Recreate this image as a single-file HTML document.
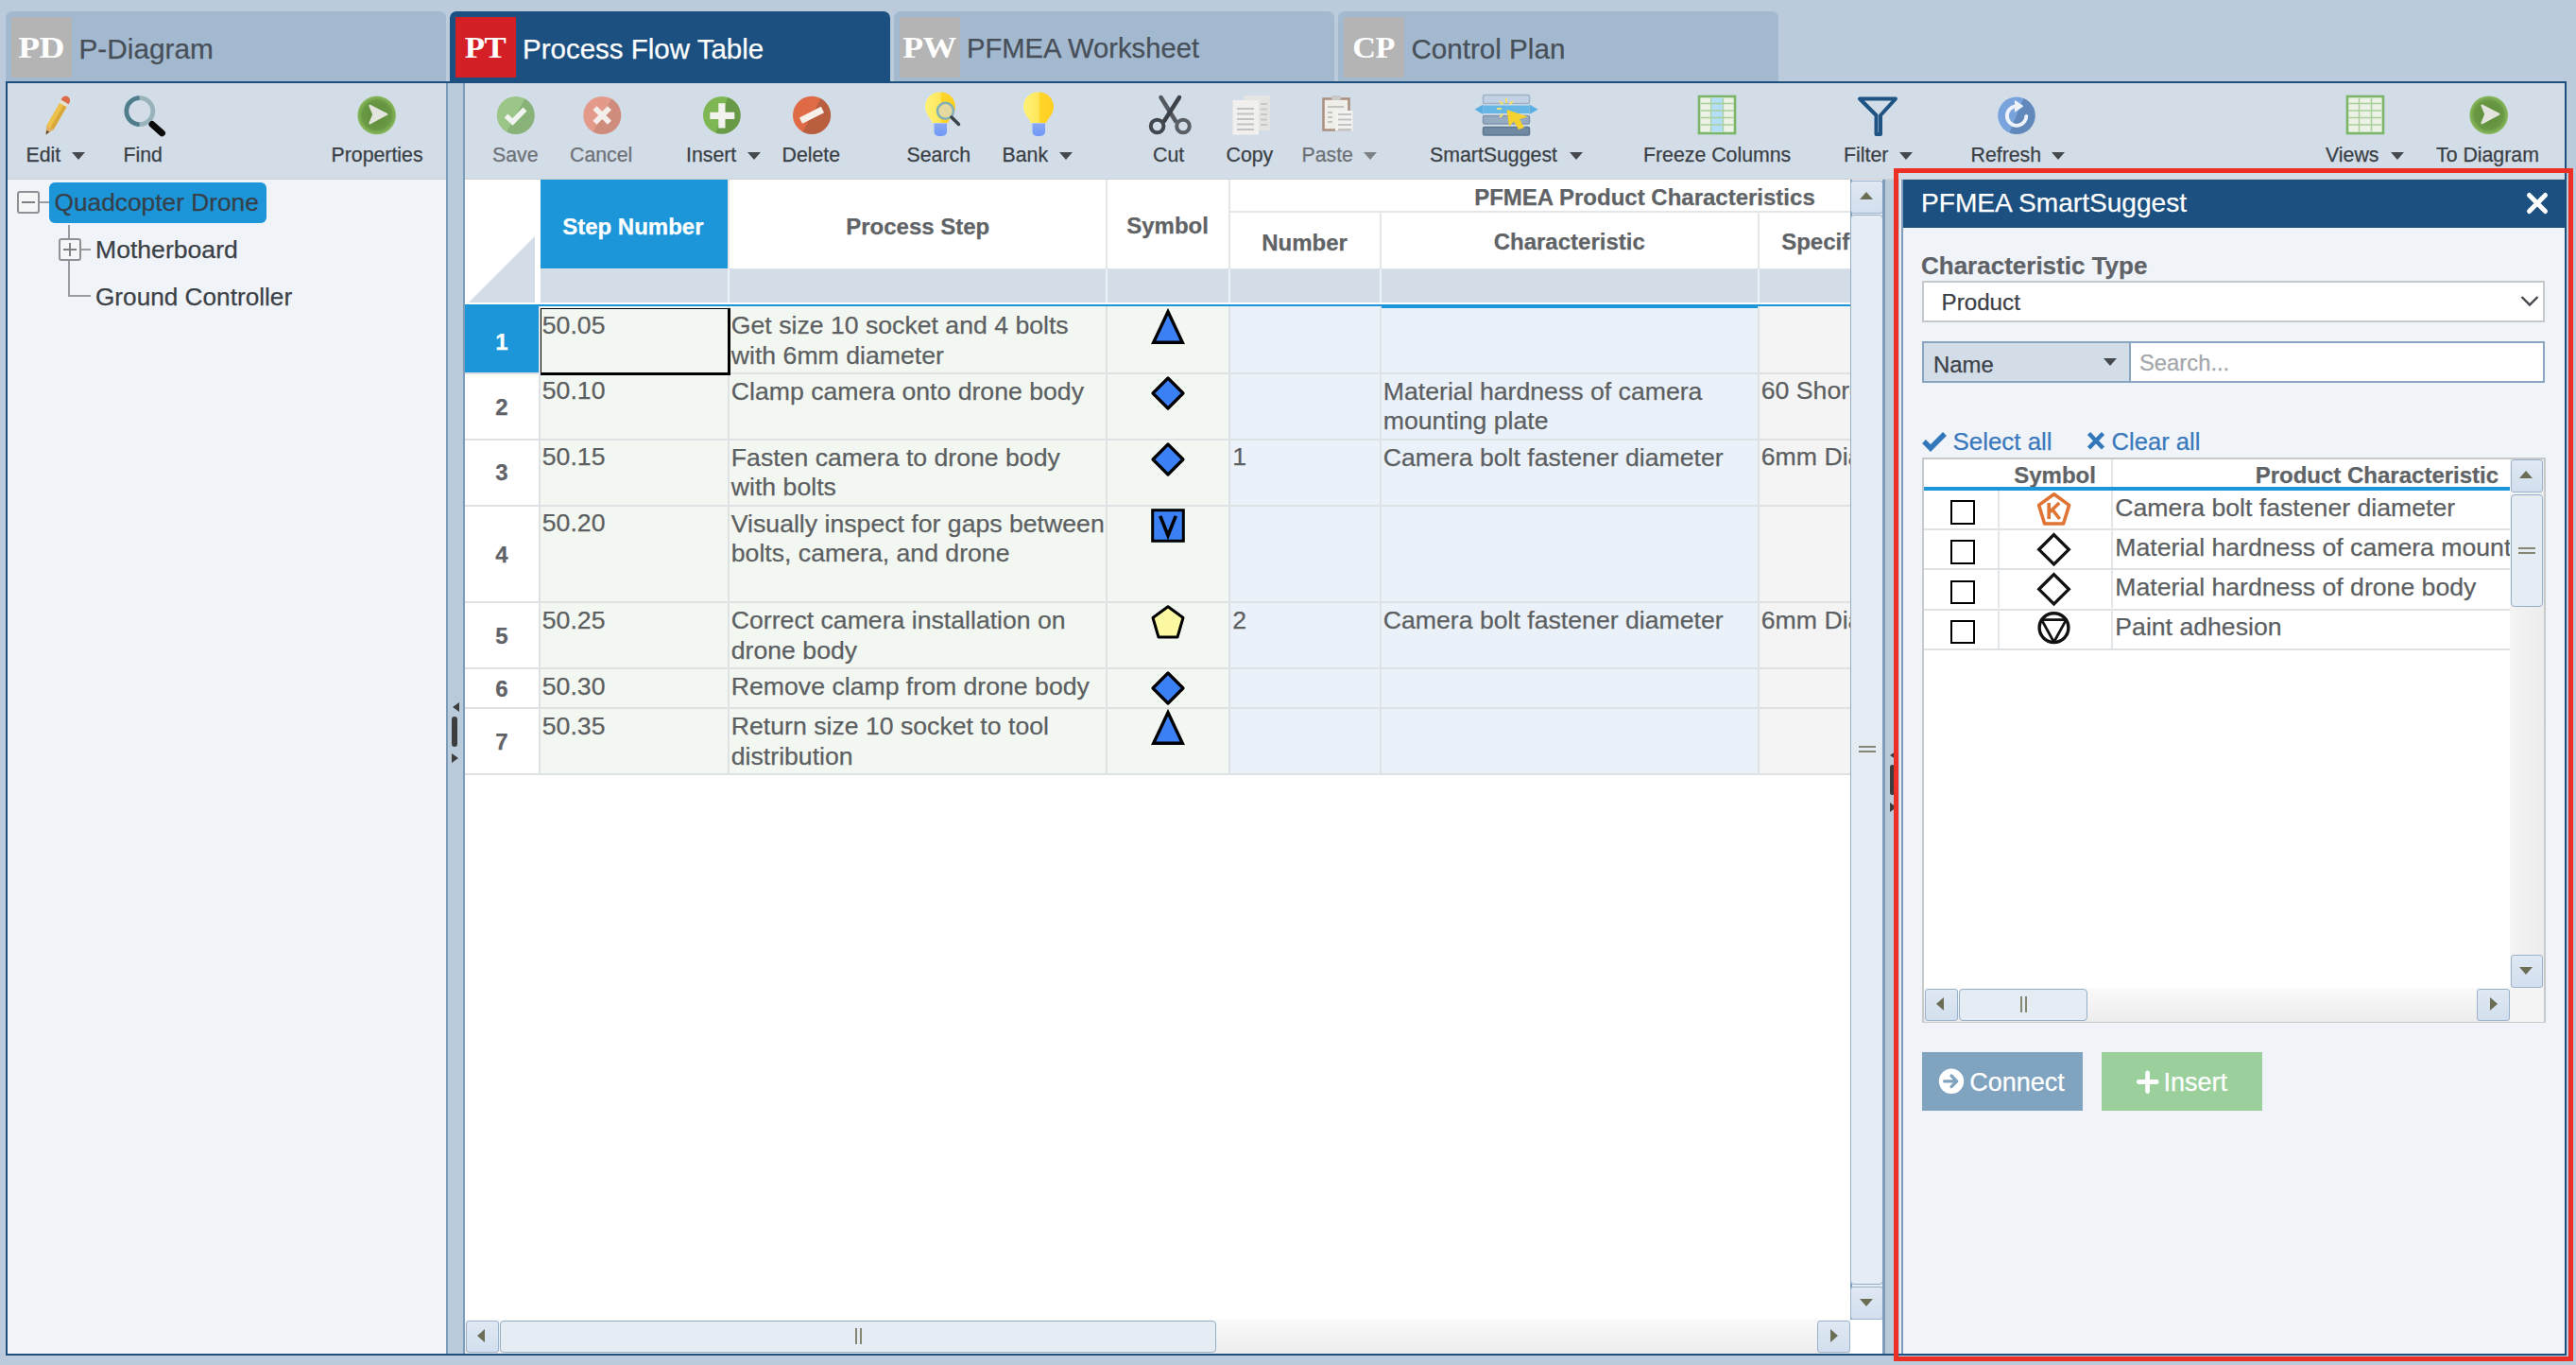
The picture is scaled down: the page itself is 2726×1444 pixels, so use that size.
<!DOCTYPE html>
<html><head><meta charset="utf-8">
<style>
html,body{margin:0;padding:0;}
body{width:2726px;height:1444px;overflow:hidden;position:relative;background:#bccbdb;font-family:"Liberation Sans",sans-serif;}
.a{position:absolute;box-sizing:border-box;}
.t{position:absolute;white-space:nowrap;line-height:1;-webkit-text-stroke:0.25px currentColor;}
.tab{position:absolute;top:12px;height:76px;width:466px;background:#a3b9cf;border-radius:7px 7px 0 0;}
.tab.on{background:#1b5080;}
.ib{position:absolute;left:6px;top:6px;width:63.5px;height:63.5px;background:#b4b4b4;}
.ib span{position:absolute;left:0;width:63px;text-align:center;top:16.3px;font-family:"Liberation Serif",serif;font-weight:bold;font-size:32px;line-height:32px;color:#fff;transform-origin:50% 0;letter-spacing:-0.5px;}
.tl{font-size:29.8px;color:#474f59;}
.tb{font-size:21.3px;color:#3a3f45;}
.dis{color:#6d7176;}
.car{position:absolute;width:0;height:0;border-left:7.5px solid transparent;border-right:7.5px solid transparent;border-top:8.5px solid #45494e;}
.hd{font-size:24px;font-weight:bold;color:#606366;margin-left:0.7px;margin-top:0.6px;}
.cl{font-size:26.65px;color:#5c5f62;margin-left:0.8px;}
.rn{font-size:24px;font-weight:bold;color:#5f6368;}
.vl{position:absolute;background:#dfe2e5;}
.sbtn{background:linear-gradient(#dfe8f3,#d3dfee);border:1.6px solid #9ab2cb;border-radius:3px;}
.sthumb{background:#e6ecf4;border:1.6px solid #94aec8;border-radius:4px;}
.tri{position:absolute;width:0;height:0;}
.tri.up{left:50%;top:50%;margin-left:-7.3px;margin-top:-5px;border-left:7.3px solid transparent;border-right:7.3px solid transparent;border-bottom:8.6px solid #6b6e55;}
.tri.dn{left:50%;top:50%;margin-left:-7.3px;margin-top:-4px;border-left:7.3px solid transparent;border-right:7.3px solid transparent;border-top:8.6px solid #6b6e55;}
.tri.lf{left:50%;top:50%;margin-left:-5px;margin-top:-7.3px;border-top:7.3px solid transparent;border-bottom:7.3px solid transparent;border-right:8.6px solid #6b6e55;}
.tri.rt{left:50%;top:50%;margin-left:-3.5px;margin-top:-7.3px;border-top:7.3px solid transparent;border-bottom:7.3px solid transparent;border-left:8.6px solid #6b6e55;}
.grip{position:absolute;left:50%;top:50%;}
.grip.h{width:18px;height:7px;margin-left:-9px;margin-top:-3.5px;border-top:2.6px solid #858772;border-bottom:2.6px solid #858772;box-sizing:border-box;}
.grip.v{width:7px;height:17px;margin-left:-3.5px;margin-top:-8.5px;border-left:2.6px solid #858772;border-right:2.6px solid #858772;box-sizing:border-box;}
</style></head><body>

<!-- TABS -->
<div class="tab" style="left:6px;"><div class="ib"><span style="transform:scaleX(1.17);">PD</span></div></div>
<div class="tab on" style="left:476px;"><div class="ib" style="background:#d41f26;"><span style="transform:scaleX(1.09);">PT</span></div></div>
<div class="tab" style="left:946px;"><div class="ib"><span style="transform:scaleX(1.12);">PW</span></div></div>
<div class="tab" style="left:1416px;"><div class="ib"><span style="transform:scaleX(1.07);">CP</span></div></div>
<div class="t tl" style="left:83.5px;top:36.6px;">P-Diagram</div>
<div class="t tl" style="left:553px;top:36.6px;color:#fff;font-size:29.5px;">Process Flow Table</div>
<div class="t tl" style="left:1023px;top:36.6px;font-size:29.2px;">PFMEA Worksheet</div>
<div class="t tl" style="left:1493.5px;top:36.6px;font-size:29.6px;">Control Plan</div>

<!-- MAIN FRAME -->
<div class="a" style="left:6px;top:86px;width:2710px;height:1348px;border:2px solid #1d4f7e;background:#f0f4f8;"></div>
<!-- toolbar -->
<div class="a" style="left:8px;top:88px;width:2706px;height:101.5px;background:#d2dde8;border-bottom:1.5px solid #cdd0d5;"></div>
<!-- left splitter -->
<div class="a" style="left:472px;top:88px;width:20px;height:1344px;background:#b9cadb;border-left:2px solid #7d9cba;border-right:2px solid #7d9cba;"></div>

<!-- TREE -->
<div class="a" style="left:52px;top:192.5px;width:230px;height:43px;background:#1c96d8;border-radius:6px;"></div>
<div class="t" style="left:57.5px;top:200.9px;font-size:26.3px;color:#36404a;">Quadcopter Drone</div>
<div class="a" style="left:18px;top:202px;width:24px;height:24px;border:2.5px solid #8e9194;border-radius:3px;background:#f4f6f8;"></div>
<div class="a" style="left:23px;top:212.8px;width:14px;height:2.5px;background:#7d8185;"></div>
<div class="a" style="left:42px;top:213px;width:10px;height:2px;background:#9a9da0;"></div>
<div class="a" style="left:71.5px;top:238px;width:2px;height:76px;background:#9a9da0;"></div>
<div class="a" style="left:62px;top:252px;width:24px;height:24px;border:2.5px solid #8e9194;border-radius:3px;background:#f4f6f8;"></div>
<div class="a" style="left:67px;top:262.8px;width:14px;height:2.5px;background:#7d8185;"></div>
<div class="a" style="left:72.8px;top:257px;width:2.5px;height:14px;background:#7d8185;"></div>
<div class="a" style="left:86px;top:263px;width:10px;height:2px;background:#9a9da0;"></div>
<div class="a" style="left:71.5px;top:312px;width:24px;height:2px;background:#9a9da0;"></div>
<div class="t" style="left:101px;top:251px;font-size:26.6px;color:#3b4046;">Motherboard</div>
<div class="t" style="left:101px;top:300.5px;font-size:26.2px;color:#3b4046;">Ground Controller</div>

<!-- TABLE -->
<div class="a" style="left:492px;top:190px;width:1466px;height:1206px;background:#fff;"></div>
<div class="a" style="left:572px;top:190px;width:198px;height:94px;background:#1c96d8;"></div>
<div class="a" style="left:572px;top:285px;width:1386px;height:35px;background:#d2dde8;"></div>
<svg class="a" style="left:492px;top:190px;" width="80" height="132"><path d="M4,130 L74,60 L74,130 z" fill="#d2dde8"/></svg>
<div class="vl" style="left:770px;top:190px;width:2px;height:94px;background:#e4e6e8;"></div>
<div class="vl" style="left:770px;top:285px;width:2px;height:35px;background:#eef2f6;"></div>
<div class="vl" style="left:1170px;top:190px;width:2px;height:94px;background:#e4e6e8;"></div>
<div class="vl" style="left:1170px;top:285px;width:2px;height:35px;background:#eef2f6;"></div>
<div class="vl" style="left:1300px;top:190px;width:2px;height:94px;background:#e4e6e8;"></div>
<div class="vl" style="left:1300px;top:285px;width:2px;height:35px;background:#eef2f6;"></div>
<div class="vl" style="left:1460px;top:224px;width:2px;height:60px;background:#e4e6e8;"></div>
<div class="vl" style="left:1460px;top:285px;width:2px;height:35px;background:#eef2f6;"></div>
<div class="vl" style="left:1860px;top:224px;width:2px;height:60px;background:#e4e6e8;"></div>
<div class="vl" style="left:1860px;top:285px;width:2px;height:35px;background:#eef2f6;"></div>
<div class="vl" style="left:572px;top:284px;width:1386px;height:1px;background:#e0e3e6;"></div>
<div class="vl" style="left:1302px;top:222.5px;width:656px;height:2px;background:#e4e6e8;"></div>
<div class="t hd" style="left:594.5px;top:227.18px;color:#fff;">Step Number</div>
<div class="t hd" style="left:894.5px;top:227.18px;">Process Step</div>
<div class="t hd" style="left:1191.5px;top:226.18px;">Symbol</div>
<div class="t hd" style="left:1559.5px;top:195.98px;">PFMEA Product Characteristics</div>
<div class="t hd" style="left:1334.5px;top:243.98px;">Number</div>
<div class="t hd" style="left:1580px;top:243.68px;">Characteristic</div>
<div class="a" style="left:1862px;top:224px;width:96px;height:60px;overflow:hidden;"><div class="t hd" style="left:22.5px;top:19.68px;">Specification</div></div>
<div class="a" style="left:492px;top:323.5px;width:78px;height:70.5px;background:#1c96d8;"></div>
<div class="a" style="left:572px;top:323.5px;width:730px;height:70.5px;background:#f3f7f1;"></div>
<div class="a" style="left:1302px;top:323.5px;width:560px;height:70.5px;background:#ebf1f8;"></div>
<div class="a" style="left:1862px;top:323.5px;width:96px;height:70.5px;background:#f4f4f4;"></div>
<div class="vl" style="left:570px;top:323.5px;width:2px;height:70.5px;"></div>
<div class="vl" style="left:770px;top:323.5px;width:2px;height:70.5px;"></div>
<div class="vl" style="left:1170px;top:323.5px;width:2px;height:70.5px;"></div>
<div class="vl" style="left:1300px;top:323.5px;width:2px;height:70.5px;"></div>
<div class="vl" style="left:1460px;top:323.5px;width:2px;height:70.5px;"></div>
<div class="vl" style="left:1860px;top:323.5px;width:2px;height:70.5px;"></div>
<div class="vl" style="left:492px;top:394px;width:1466px;height:2px;"></div>
<div class="t rn" style="left:492px;width:78px;text-align:center;top:349.68px;color:#fff;">1</div>
<div class="t cl" style="left:573px;top:330.65px;">50.05</div>
<div class="t cl" style="left:773px;top:331.05px;">Get size 10 socket and 4 bolts</div>
<div class="t cl" style="left:773px;top:362.85px;">with 6mm diameter</div>
<svg class="a" style="left:1216px;top:325.5px;" width="40" height="40"><path d="M20,3.8 L35.3,36.2 L4.7,36.2 z" fill="#3b80f5" stroke="#000" stroke-width="3.4" stroke-linejoin="miter"/></svg>
<div class="a" style="left:492px;top:396px;width:78px;height:68px;background:#fff;"></div>
<div class="a" style="left:572px;top:396px;width:730px;height:68px;background:#f3f7f1;"></div>
<div class="a" style="left:1302px;top:396px;width:560px;height:68px;background:#ebf1f8;"></div>
<div class="a" style="left:1862px;top:396px;width:96px;height:68px;background:#f4f4f4;"></div>
<div class="vl" style="left:570px;top:396px;width:2px;height:68px;"></div>
<div class="vl" style="left:770px;top:396px;width:2px;height:68px;"></div>
<div class="vl" style="left:1170px;top:396px;width:2px;height:68px;"></div>
<div class="vl" style="left:1300px;top:396px;width:2px;height:68px;"></div>
<div class="vl" style="left:1460px;top:396px;width:2px;height:68px;"></div>
<div class="vl" style="left:1860px;top:396px;width:2px;height:68px;"></div>
<div class="vl" style="left:492px;top:464px;width:1466px;height:2px;"></div>
<div class="t rn" style="left:492px;width:78px;text-align:center;top:419.18px;color:#5f6368;">2</div>
<div class="t cl" style="left:573px;top:400.15px;">50.10</div>
<div class="t cl" style="left:773px;top:400.55px;">Clamp camera onto drone body</div>
<div class="t cl" style="left:1463px;top:400.55px;">Material hardness of camera</div>
<div class="t cl" style="left:1463px;top:432.35px;">mounting plate</div>
<div class="a" style="left:1862px;top:396px;width:96px;height:68px;overflow:hidden;"><div class="t cl" style="left:1px;top:4.15px;">60 Shore A</div></div>
<svg class="a" style="left:1216px;top:396px;" width="40" height="40"><path d="M20,4 L36,20 L20,36 L4,20 z" fill="#3b80f5" stroke="#000" stroke-width="3.2" stroke-linejoin="round"/></svg>
<div class="a" style="left:492px;top:466px;width:78px;height:68px;background:#fff;"></div>
<div class="a" style="left:572px;top:466px;width:730px;height:68px;background:#f3f7f1;"></div>
<div class="a" style="left:1302px;top:466px;width:560px;height:68px;background:#ebf1f8;"></div>
<div class="a" style="left:1862px;top:466px;width:96px;height:68px;background:#f4f4f4;"></div>
<div class="vl" style="left:570px;top:466px;width:2px;height:68px;"></div>
<div class="vl" style="left:770px;top:466px;width:2px;height:68px;"></div>
<div class="vl" style="left:1170px;top:466px;width:2px;height:68px;"></div>
<div class="vl" style="left:1300px;top:466px;width:2px;height:68px;"></div>
<div class="vl" style="left:1460px;top:466px;width:2px;height:68px;"></div>
<div class="vl" style="left:1860px;top:466px;width:2px;height:68px;"></div>
<div class="vl" style="left:492px;top:534px;width:1466px;height:2px;"></div>
<div class="t rn" style="left:492px;width:78px;text-align:center;top:488.43px;color:#5f6368;">3</div>
<div class="t cl" style="left:573px;top:470.15px;">50.15</div>
<div class="t cl" style="left:773px;top:470.55px;">Fasten camera to drone body</div>
<div class="t cl" style="left:773px;top:502.35px;">with bolts</div>
<div class="t cl" style="left:1303.5px;top:470.15px;">1</div>
<div class="t cl" style="left:1463px;top:470.55px;">Camera bolt fastener diameter</div>
<div class="a" style="left:1862px;top:466px;width:96px;height:68px;overflow:hidden;"><div class="t cl" style="left:1px;top:4.15px;">6mm Diameter</div></div>
<svg class="a" style="left:1216px;top:466px;" width="40" height="40"><path d="M20,4 L36,20 L20,36 L4,20 z" fill="#3b80f5" stroke="#000" stroke-width="3.2" stroke-linejoin="round"/></svg>
<div class="a" style="left:492px;top:536px;width:78px;height:100px;background:#fff;"></div>
<div class="a" style="left:572px;top:536px;width:730px;height:100px;background:#f3f7f1;"></div>
<div class="a" style="left:1302px;top:536px;width:560px;height:100px;background:#ebf1f8;"></div>
<div class="a" style="left:1862px;top:536px;width:96px;height:100px;background:#f4f4f4;"></div>
<div class="vl" style="left:570px;top:536px;width:2px;height:100px;"></div>
<div class="vl" style="left:770px;top:536px;width:2px;height:100px;"></div>
<div class="vl" style="left:1170px;top:536px;width:2px;height:100px;"></div>
<div class="vl" style="left:1300px;top:536px;width:2px;height:100px;"></div>
<div class="vl" style="left:1460px;top:536px;width:2px;height:100px;"></div>
<div class="vl" style="left:1860px;top:536px;width:2px;height:100px;"></div>
<div class="vl" style="left:492px;top:636px;width:1466px;height:2px;"></div>
<div class="t rn" style="left:492px;width:78px;text-align:center;top:574.68px;color:#5f6368;">4</div>
<div class="t cl" style="left:573px;top:540.15px;">50.20</div>
<div class="t cl" style="left:773px;top:540.55px;">Visually inspect for gaps between</div>
<div class="t cl" style="left:773px;top:572.35px;">bolts, camera, and drone</div>
<svg class="a" style="left:1216px;top:536px;" width="40" height="40"><rect x="3.7" y="3.7" width="32.6" height="32.6" fill="#3b80f5" stroke="#000" stroke-width="3"/><path d="M11.8,9.8 L20,30.5 L28.2,9.8" fill="none" stroke="#000" stroke-width="3.6"/></svg>
<div class="a" style="left:492px;top:638px;width:78px;height:68px;background:#fff;"></div>
<div class="a" style="left:572px;top:638px;width:730px;height:68px;background:#f3f7f1;"></div>
<div class="a" style="left:1302px;top:638px;width:560px;height:68px;background:#ebf1f8;"></div>
<div class="a" style="left:1862px;top:638px;width:96px;height:68px;background:#f4f4f4;"></div>
<div class="vl" style="left:570px;top:638px;width:2px;height:68px;"></div>
<div class="vl" style="left:770px;top:638px;width:2px;height:68px;"></div>
<div class="vl" style="left:1170px;top:638px;width:2px;height:68px;"></div>
<div class="vl" style="left:1300px;top:638px;width:2px;height:68px;"></div>
<div class="vl" style="left:1460px;top:638px;width:2px;height:68px;"></div>
<div class="vl" style="left:1860px;top:638px;width:2px;height:68px;"></div>
<div class="vl" style="left:492px;top:706px;width:1466px;height:2px;"></div>
<div class="t rn" style="left:492px;width:78px;text-align:center;top:660.93px;color:#5f6368;">5</div>
<div class="t cl" style="left:573px;top:642.65px;">50.25</div>
<div class="t cl" style="left:773px;top:643.05px;">Correct camera installation on</div>
<div class="t cl" style="left:773px;top:674.85px;">drone body</div>
<div class="t cl" style="left:1303.5px;top:642.65px;">2</div>
<div class="t cl" style="left:1463px;top:643.05px;">Camera bolt fastener diameter</div>
<div class="a" style="left:1862px;top:638px;width:96px;height:68px;overflow:hidden;"><div class="t cl" style="left:1px;top:4.65px;">6mm Diameter</div></div>
<svg class="a" style="left:1216px;top:638px;" width="40" height="40"><path d="M20,3.8 L36,15.5 L30,36 L10,36 L4,15.5 z" fill="#fdf9a2" stroke="#000" stroke-width="3" stroke-linejoin="round"/></svg>
<div class="a" style="left:492px;top:708px;width:78px;height:40px;background:#fff;"></div>
<div class="a" style="left:572px;top:708px;width:730px;height:40px;background:#f3f7f1;"></div>
<div class="a" style="left:1302px;top:708px;width:560px;height:40px;background:#ebf1f8;"></div>
<div class="a" style="left:1862px;top:708px;width:96px;height:40px;background:#f4f4f4;"></div>
<div class="vl" style="left:570px;top:708px;width:2px;height:40px;"></div>
<div class="vl" style="left:770px;top:708px;width:2px;height:40px;"></div>
<div class="vl" style="left:1170px;top:708px;width:2px;height:40px;"></div>
<div class="vl" style="left:1300px;top:708px;width:2px;height:40px;"></div>
<div class="vl" style="left:1460px;top:708px;width:2px;height:40px;"></div>
<div class="vl" style="left:1860px;top:708px;width:2px;height:40px;"></div>
<div class="vl" style="left:492px;top:748px;width:1466px;height:2px;"></div>
<div class="t rn" style="left:492px;width:78px;text-align:center;top:716.68px;color:#5f6368;">6</div>
<div class="t cl" style="left:573px;top:712.65px;">50.30</div>
<div class="t cl" style="left:773px;top:713.05px;">Remove clamp from drone body</div>
<svg class="a" style="left:1216px;top:708px;" width="40" height="40"><path d="M20,4 L36,20 L20,36 L4,20 z" fill="#3b80f5" stroke="#000" stroke-width="3.2" stroke-linejoin="round"/></svg>
<div class="a" style="left:492px;top:750px;width:78px;height:68px;background:#fff;"></div>
<div class="a" style="left:572px;top:750px;width:730px;height:68px;background:#f3f7f1;"></div>
<div class="a" style="left:1302px;top:750px;width:560px;height:68px;background:#ebf1f8;"></div>
<div class="a" style="left:1862px;top:750px;width:96px;height:68px;background:#f4f4f4;"></div>
<div class="vl" style="left:570px;top:750px;width:2px;height:68px;"></div>
<div class="vl" style="left:770px;top:750px;width:2px;height:68px;"></div>
<div class="vl" style="left:1170px;top:750px;width:2px;height:68px;"></div>
<div class="vl" style="left:1300px;top:750px;width:2px;height:68px;"></div>
<div class="vl" style="left:1460px;top:750px;width:2px;height:68px;"></div>
<div class="vl" style="left:1860px;top:750px;width:2px;height:68px;"></div>
<div class="vl" style="left:492px;top:818px;width:1466px;height:2px;"></div>
<div class="t rn" style="left:492px;width:78px;text-align:center;top:773.43px;color:#5f6368;">7</div>
<div class="t cl" style="left:573px;top:754.65px;">50.35</div>
<div class="t cl" style="left:773px;top:755.05px;">Return size 10 socket to tool</div>
<div class="t cl" style="left:773px;top:786.85px;">distribution</div>
<svg class="a" style="left:1216px;top:750px;" width="40" height="40"><path d="M20,3.8 L35.3,36.2 L4.7,36.2 z" fill="#3b80f5" stroke="#000" stroke-width="3.4" stroke-linejoin="miter"/></svg>
<div class="vl" style="left:492px;top:321.5px;width:1466px;height:2.3px;background:#1c96d8;"></div>
<div class="vl" style="left:1462px;top:321.5px;width:398px;height:4px;background:#1c96d8;"></div>
<div class="a" style="left:572px;top:326px;width:201px;height:71px;border-style:solid;border-color:#000;border-width:1.6px 3px 3.6px 1.6px;"></div>

<!-- MAIN SCROLLBARS -->
<div class="a" style="left:1958px;top:190px;width:35px;height:1242px;background:#e8edf4;border-left:2px solid #7f9ebc;"></div>
<div class="a sbtn" style="left:1958px;top:190.5px;width:35px;height:35px;"><div class="tri up"></div></div>
<div class="a sthumb" style="left:1958px;top:226.5px;width:35px;height:1132px;"><div class="grip h"></div></div>
<div class="a sbtn" style="left:1958px;top:1360.5px;width:35px;height:35px;"><div class="tri dn"></div></div>
<div class="a" style="left:492px;top:1396px;width:1466px;height:36px;background:linear-gradient(#fafafa,#ececec);"></div>
<div class="a" style="left:1958px;top:1396px;width:35px;height:36px;background:#fff;"></div>
<div class="a sbtn" style="left:493px;top:1396.5px;width:34.5px;height:34.5px;"><div class="tri lf"></div></div>
<div class="a sthumb" style="left:529px;top:1396.5px;width:758px;height:34.5px;"><div class="grip v"></div></div>
<div class="a sbtn" style="left:1923px;top:1396.5px;width:34.5px;height:34.5px;"><div class="tri rt"></div></div>
<!-- right splitter -->
<div class="a" style="left:1992px;top:190px;width:17.5px;height:1242px;background:#b9cadb;border-left:3.5px solid #7d9cba;"></div>
<div class="a" style="left:2009.5px;top:190px;width:2.5px;height:1242px;background:#e6ecf2;"></div>
<div class="a" style="left:2000px;top:809px;width:5px;height:31.5px;background:#3d3d3d;border-radius:3px;"></div>
<div class="a" style="left:2000px;top:794.5px;width:0;height:0;border-top:4.5px solid transparent;border-bottom:4.5px solid transparent;border-right:6.5px solid #3d3d3d;"></div>
<div class="a" style="left:2000px;top:848.5px;width:0;height:0;border-top:5px solid transparent;border-bottom:5px solid transparent;border-left:7.5px solid #3d3d3d;"></div>
<!-- left splitter handle -->
<div class="a" style="left:478px;top:758px;width:6px;height:32px;background:#3d3d3d;border-radius:3px;"></div>
<div class="a" style="left:478.5px;top:743.3px;width:0;height:0;border-top:5px solid transparent;border-bottom:5px solid transparent;border-right:7.5px solid #3d3d3d;"></div>
<div class="a" style="left:478px;top:797.3px;width:0;height:0;border-top:5px solid transparent;border-bottom:5px solid transparent;border-left:7.5px solid #3d3d3d;"></div>

<!-- SMARTSUGGEST PANEL -->
<div class="a" style="left:2012px;top:190px;width:702px;height:1242px;background:#f0f4f8;border-left:2px solid #7d9cba;"></div>
<div class="a" style="left:2014px;top:190px;width:700px;height:50.6px;background:#1b5080;"></div>
<div class="t" style="left:2033px;top:201.4px;font-size:28.1px;color:#fff;">PFMEA SmartSuggest</div>
<svg class="a" style="left:2670px;top:200px;" width="30" height="30"><path d="M6.5,6.5 L23.5,23.5 M23.5,6.5 L6.5,23.5" stroke="#fff" stroke-width="5" stroke-linecap="round"/></svg>
<div class="t" style="left:2033px;top:267.8px;font-size:26px;font-weight:bold;color:#5f6368;">Characteristic Type</div>
<div class="a" style="left:2034px;top:297px;width:659px;height:43.5px;background:#fff;border:2px solid #c6c9cc;"></div>
<div class="t" style="left:2054.5px;top:308.2px;font-size:24.2px;color:#3b4046;">Product</div>
<svg class="a" style="left:2664px;top:308px;" width="26" height="22"><path d="M4.5,6 L13,14.5 L21.5,6" fill="none" stroke="#44484c" stroke-width="2.4"/></svg>
<div class="a" style="left:2034px;top:361px;width:221px;height:44px;background:#d2dde8;border:2px solid #8aa5c0;"></div>
<div class="t" style="left:2046px;top:374.2px;font-size:23.9px;color:#3b4046;">Name</div>
<div class="car" style="left:2226px;top:378.7px;border-top-width:8.5px;"></div>
<div class="a" style="left:2253px;top:361px;width:440px;height:44px;background:#fff;border:2px solid #8aa5c0;border-left-width:2px;"></div>
<div class="t" style="left:2264px;top:372.2px;font-size:23.8px;color:#a3a6aa;">Search...</div>
<svg class="a" style="left:2032px;top:452px;" width="32" height="28"><path d="M4,15 L11,22 L26,7" fill="none" stroke="#3377bb" stroke-width="5.5"/></svg>
<div class="t" style="left:2066.5px;top:454.8px;font-size:25.9px;color:#3b79bd;">Select all</div>
<svg class="a" style="left:2206px;top:454px;" width="24" height="25"><path d="M4.5,4.5 L19.5,20 M19.5,4.5 L4.5,20" stroke="#3377bb" stroke-width="4.5"/></svg>
<div class="t" style="left:2234.5px;top:454.8px;font-size:25.6px;color:#3b79bd;">Clear all</div>
<!-- grid -->
<div class="a" style="left:2034px;top:483.5px;width:660px;height:598px;background:#fff;border:2px solid #c8c9cb;"></div>
<div class="t hd" style="left:2130.5px;top:490.5px;">Symbol</div>
<div class="t hd" style="left:2386px;top:490.5px;">Product Characteristic</div>
<div class="vl" style="left:2234px;top:485.5px;width:2px;height:30px;background:#e4e6e8;"></div>
<div class="vl" style="left:2036px;top:515px;width:620px;height:4px;background:#1c96d8;"></div>
<div class="vl" style="left:2036px;top:559.3px;width:620px;height:2px;"></div>
<div class="vl" style="left:2114px;top:519.0px;width:2px;height:40.3px;background:#e4e6e8;"></div>
<div class="vl" style="left:2234px;top:519.0px;width:2px;height:40.3px;background:#e4e6e8;"></div>
<div class="a" style="left:2064.3px;top:529.3px;width:25.6px;height:25.4px;border:2.6px solid #000;background:#fff;"></div>
<div class="a" style="left:2236px;top:519.0px;width:420px;height:40px;overflow:hidden;"><div class="t cl" style="left:1.5px;top:4.65px;">Camera bolt fastener diameter</div></div>
<div class="vl" style="left:2036px;top:601.4px;width:620px;height:2px;"></div>
<div class="vl" style="left:2114px;top:561.1px;width:2px;height:40.3px;background:#e4e6e8;"></div>
<div class="vl" style="left:2234px;top:561.1px;width:2px;height:40.3px;background:#e4e6e8;"></div>
<div class="a" style="left:2064.3px;top:571.4px;width:25.6px;height:25.4px;border:2.6px solid #000;background:#fff;"></div>
<div class="a" style="left:2236px;top:561.1px;width:420px;height:40px;overflow:hidden;"><div class="t cl" style="left:1.5px;top:4.65px;">Material hardness of camera mounting plate</div></div>
<div class="vl" style="left:2036px;top:643.5px;width:620px;height:2px;"></div>
<div class="vl" style="left:2114px;top:603.2px;width:2px;height:40.3px;background:#e4e6e8;"></div>
<div class="vl" style="left:2234px;top:603.2px;width:2px;height:40.3px;background:#e4e6e8;"></div>
<div class="a" style="left:2064.3px;top:613.5px;width:25.6px;height:25.4px;border:2.6px solid #000;background:#fff;"></div>
<div class="a" style="left:2236px;top:603.2px;width:420px;height:40px;overflow:hidden;"><div class="t cl" style="left:1.5px;top:4.65px;">Material hardness of drone body</div></div>
<div class="vl" style="left:2036px;top:685.6px;width:620px;height:2px;"></div>
<div class="vl" style="left:2114px;top:645.3px;width:2px;height:40.3px;background:#e4e6e8;"></div>
<div class="vl" style="left:2234px;top:645.3px;width:2px;height:40.3px;background:#e4e6e8;"></div>
<div class="a" style="left:2064.3px;top:655.6px;width:25.6px;height:25.4px;border:2.6px solid #000;background:#fff;"></div>
<div class="a" style="left:2236px;top:645.3px;width:420px;height:40px;overflow:hidden;"><div class="t cl" style="left:1.5px;top:4.65px;">Paint adhesion</div></div>
<svg class="a" style="left:2154px;top:519px;" width="40" height="40"><path d="M19.6,3.8 L35.6,15.4 L29.6,35 L9.6,35 L3.6,15.4 z" fill="#fff" stroke="#e07434" stroke-width="3.6" stroke-linejoin="round"/><path d="M14.2,13 V30 M25.2,13 L14.6,23 M17.8,19.8 L25.6,30" fill="none" stroke="#e07434" stroke-width="3.6"/></svg>
<svg class="a" style="left:2154px;top:561px;" width="40" height="40"><path d="M19.5,4.6 L35.3,20.3 L19.5,36 L3.7,20.3 z" fill="#fff" stroke="#111" stroke-width="3.3"/></svg>
<svg class="a" style="left:2154px;top:603px;" width="40" height="40"><path d="M19.5,4.6 L35.3,20.3 L19.5,36 L3.7,20.3 z" fill="#fff" stroke="#111" stroke-width="3.3"/></svg>
<svg class="a" style="left:2154px;top:645px;" width="40" height="40"><circle cx="19.5" cy="19.1" r="15.4" fill="#fff" stroke="#111" stroke-width="3.4"/><path d="M6.5,10.6 H32.5 L19.5,34.2 z" fill="none" stroke="#111" stroke-width="2.8" stroke-linejoin="round"/></svg>
<div class="a" style="left:2656px;top:485.5px;width:36px;height:560px;background:linear-gradient(90deg,#f4f4f4,#ececec);"></div>
<div class="a sbtn" style="left:2656.5px;top:485.5px;width:34.5px;height:35px;"><div class="tri up"></div></div>
<div class="a sthumb" style="left:2656.5px;top:522.5px;width:34.5px;height:119px;"><div class="grip h"></div></div>
<div class="a sbtn" style="left:2656.5px;top:1010px;width:34.5px;height:34.5px;"><div class="tri dn"></div></div>
<div class="a" style="left:2036px;top:1045px;width:620px;height:35.5px;background:linear-gradient(#fafafa,#ececec);"></div>
<div class="a sbtn" style="left:2036.5px;top:1045.5px;width:35px;height:34.5px;"><div class="tri lf"></div></div>
<div class="a sthumb" style="left:2073px;top:1045.5px;width:136px;height:34.5px;"><div class="grip v"></div></div>
<div class="a sbtn" style="left:2620.5px;top:1045.5px;width:35px;height:34.5px;"><div class="tri rt"></div></div>
<div class="a" style="left:2656px;top:1045px;width:36px;height:35.5px;background:#f4f4f4;"></div>
<!-- buttons -->
<div class="a" style="left:2034px;top:1113.3px;width:170px;height:62px;background:#80a3c0;"></div>
<svg class="a" style="left:2050px;top:1129px;" width="30" height="30"><circle cx="15" cy="14.8" r="13.2" fill="#fff"/><path d="M7.6,14.8 H20.5 M15,9 L20.8,14.8 L15,20.6" fill="none" stroke="#80a3c0" stroke-width="3.2" stroke-linecap="round" stroke-linejoin="round"/></svg>
<div class="t" style="left:2084.3px;top:1132px;font-size:27px;color:#fff;">Connect</div>
<div class="a" style="left:2224.3px;top:1113.3px;width:169.3px;height:62px;background:#9bd09d;"></div>
<svg class="a" style="left:2258px;top:1130px;" width="30" height="30"><path d="M14.6,5 V24.6 M5.3,14.5 H24.3" stroke="#fff" stroke-width="4.8" stroke-linecap="round"/></svg>
<div class="t" style="left:2289.5px;top:1132px;font-size:27px;color:#fff;">Insert</div>
<!-- red highlight -->
<div class="a" style="left:2003.5px;top:178.3px;width:719.7px;height:1262px;border:5.6px solid #ec3026;"></div>

<!-- TOOLBAR LABELS -->
<div class="t tb" style="left:27.5px;top:154.2px;">Edit</div><div class="car" style="left:76px;top:160.5px;"></div>
<div class="t tb" style="left:130.5px;top:154.2px;">Find</div>
<div class="t tb" style="left:350.5px;top:154.2px;">Properties</div>
<div class="t tb dis" style="left:521px;top:154.2px;">Save</div>
<div class="t tb dis" style="left:603px;top:154.2px;">Cancel</div>
<div class="t tb" style="left:726px;top:154.2px;">Insert</div><div class="car" style="left:790.5px;top:160.5px;"></div>
<div class="t tb" style="left:827.5px;top:154.2px;">Delete</div>
<div class="t tb" style="left:959.5px;top:154.2px;">Search</div>
<div class="t tb" style="left:1060.5px;top:154.2px;">Bank</div><div class="car" style="left:1121px;top:160.5px;"></div>
<div class="t tb" style="left:1220px;top:154.2px;">Cut</div>
<div class="t tb" style="left:1297.5px;top:154.2px;">Copy</div>
<div class="t tb dis" style="left:1377.5px;top:154.2px;">Paste</div><div class="car" style="left:1442.5px;top:160.5px;border-top-color:#7d8186;"></div>
<div class="t tb" style="left:1513px;top:154.2px;">SmartSuggest</div><div class="car" style="left:1660.5px;top:160.5px;"></div>
<div class="t tb" style="left:1739px;top:154.2px;">Freeze Columns</div>
<div class="t tb" style="left:1951px;top:154.2px;">Filter</div><div class="car" style="left:2010px;top:160.5px;"></div>
<div class="t tb" style="left:2085.5px;top:154.2px;">Refresh</div><div class="car" style="left:2170.5px;top:160.5px;"></div>
<div class="t tb" style="left:2461px;top:154.2px;">Views</div><div class="car" style="left:2529.5px;top:160.5px;"></div>
<div class="t tb" style="left:2578px;top:154.2px;">To Diagram</div>

<!-- TOOLBAR ICONS -->
<svg class="a" style="left:0;top:88px;" width="2726" height="100" viewBox="0 88 2726 100">
 <defs>
  <radialGradient id="gGreen" cx="35%" cy="30%" r="75%"><stop offset="0" stop-color="#86c25a"/><stop offset="1" stop-color="#4b8a30"/></radialGradient>
  <radialGradient id="gRim" cx="50%" cy="50%" r="50%"><stop offset="0" stop-color="#5c8a3a"/><stop offset="0.75" stop-color="#6a9944"/><stop offset="1" stop-color="#8abb5e"/></radialGradient>
  <linearGradient id="gRef" x1="0" y1="0.3" x2="1" y2="0.7"><stop offset="0.5" stop-color="#78a3dc"/><stop offset="0.5" stop-color="#6088ba"/></linearGradient>
  <linearGradient id="gIns" x1="0.03" y1="0.34" x2="0.97" y2="0.66"><stop offset="0.5" stop-color="#7db653"/><stop offset="0.5" stop-color="#689a47"/></linearGradient>
  <linearGradient id="gDel" x1="0.06" y1="0.26" x2="0.94" y2="0.74"><stop offset="0.5" stop-color="#de6b46"/><stop offset="0.5" stop-color="#b95e3e"/></linearGradient>
  <linearGradient id="gSav" x1="0.06" y1="0.26" x2="0.94" y2="0.74"><stop offset="0.5" stop-color="#9cc588"/><stop offset="0.5" stop-color="#88b278"/></linearGradient>
  <linearGradient id="gCan" x1="0.06" y1="0.26" x2="0.94" y2="0.74"><stop offset="0.5" stop-color="#e39a8a"/><stop offset="0.5" stop-color="#cf8b7c"/></linearGradient>
  <linearGradient id="gBulb" x1="0" y1="0" x2="1" y2="0"><stop offset="0" stop-color="#fff27a"/><stop offset="0.5" stop-color="#ffe75a"/><stop offset="0.55" stop-color="#ffd52a"/><stop offset="1" stop-color="#ffcf20"/></linearGradient>
  <linearGradient id="gBase" x1="0" y1="0" x2="0" y2="1"><stop offset="0" stop-color="#8aa8f0"/><stop offset="1" stop-color="#6f98f6"/></linearGradient>
 </defs>
 <!-- pencil -->
 <g transform="translate(59.8,123) rotate(30)">
  <rect x="-4.3" y="-14" width="8.6" height="28" fill="#edc04c"/>
  <rect x="0.5" y="-14" width="3.8" height="28" fill="#d9a83a"/>
  <rect x="-4.3" y="-17.5" width="8.6" height="3.5" fill="#e6e2d2"/>
  <path d="M-4.6,-17.5 L-4.6,-19.5 A4.6,4.6 0 0 1 4.6,-19.5 L4.6,-17.5 z" fill="#dd6a48"/>
  <path d="M-4.3,14 L4.3,14 L0,22.5 z" fill="#e0b060"/>
  <path d="M-1.8,18 L1.8,18 L0,22.5 z" fill="#5a4a3a"/>
 </g>
 <!-- find magnifier -->
 <path d="M147.8,103.6 A14,14 0 0 0 147.8,131.6" fill="none" stroke="#4f7d8b" stroke-width="4.8"/>
 <path d="M147.8,103.6 A14,14 0 0 1 147.8,131.6" fill="none" stroke="#98b3bc" stroke-width="4.8"/>
 <line x1="161" y1="131.5" x2="171.5" y2="140.8" stroke="#0a0a0a" stroke-width="7" stroke-linecap="round"/>
 <!-- properties -->
 <circle cx="398.7" cy="121.9" r="20.3" fill="url(#gRim)"/>
 <path d="M391.5,111.8 L409.3,120.9 L391.5,130.4 L395.3,121.1 z" fill="#e3e4de" stroke="#e3e4de" stroke-width="2.2" stroke-linejoin="round"/>
 <!-- save (disabled) -->
 <circle cx="545.8" cy="122" r="20" fill="url(#gSav)"/>
 <path d="M535.5,122.5 L542.5,129 L555.5,115.5" fill="none" stroke="#f2f4f0" stroke-width="5.5"/>
 <!-- cancel -->
 <circle cx="637.3" cy="122" r="20" fill="url(#gCan)"/>
 <path d="M629.5,114.2 L645,129.8 M645,114.2 L629.5,129.8" stroke="#f4eeea" stroke-width="5.8"/>
 <!-- insert -->
 <circle cx="763.9" cy="121.8" r="19.9" fill="url(#gIns)"/>
 <path d="M763.9,109.2 V135.6 M751.3,122.3 H777.3" stroke="#f2f3ee" stroke-width="7.2"/>
 <!-- delete -->
 <circle cx="859.1" cy="121.9" r="20.1" fill="url(#gDel)"/>
 <path d="M847.5,127.6 L870.5,116" stroke="#f6efea" stroke-width="7"/>
 <!-- search bulb -->
 <path d="M995,97.5 C1005,97.5 1011,105 1011,113 C1011,121 1005,125 1003,130 L987,130 C985,125 979,121 979,113 C979,105 985,97.5 995,97.5 z" fill="url(#gBulb)"/>
 <path d="M988.5,130.5 H1002 V139 C1002,143 999,144 995,144 C991,144 988.5,143 988.5,139 z" fill="url(#gBase)"/>
 <circle cx="1000.5" cy="117.3" r="8.5" fill="#e6d9a0" stroke="#7fb0b8" stroke-width="2.5"/>
 <line x1="1007" y1="124" x2="1014.5" y2="131.5" stroke="#3d4348" stroke-width="3.5" stroke-linecap="round"/>
 <!-- bank bulb -->
 <path d="M1099,97.5 C1109,97.5 1115,105 1115,113 C1115,121 1109,125 1107,130 L1091,130 C1089,125 1083,121 1083,113 C1083,105 1089,97.5 1099,97.5 z" fill="url(#gBulb)"/>
 <path d="M1092.5,130.5 H1106 V139 C1106,143 1103,144 1099,144 C1095,144 1092.5,143 1092.5,139 z" fill="url(#gBase)"/>
 <!-- scissors -->
 <path d="M1228.5,103 L1244,128" stroke="#555a60" stroke-width="4.5" stroke-linecap="round"/>
 <path d="M1248,103 L1232,128" stroke="#3e4349" stroke-width="4.5" stroke-linecap="round"/>
 <circle cx="1224.6" cy="133.5" r="6.8" fill="none" stroke="#42474d" stroke-width="4"/>
 <circle cx="1252" cy="133.5" r="6.8" fill="none" stroke="#5a5f65" stroke-width="4"/>
 <!-- copy -->
 <rect x="1316.5" y="101" width="27.5" height="37" fill="#e4e4e2"/>
 <rect x="1304.5" y="106" width="27.5" height="36.5" fill="#f1f0ee"/>
 <path d="M1309,115 H1327 M1309,120.5 H1327 M1309,126 H1327 M1309,131.5 H1327 M1309,137 H1327" stroke="#c2c2c0" stroke-width="1.8"/>
 <path d="M1334,110 H1341 M1334,115.5 H1341 M1334,121 H1341 M1334,126.5 H1341 M1334,132 H1341" stroke="#c8c8c6" stroke-width="1.8"/>
 <!-- paste -->
 <rect x="1400.5" y="104.5" width="27" height="33" fill="#efeee9" stroke="#ab8f80" stroke-width="2.5"/>
 <rect x="1409" y="101" width="10" height="5" rx="2" fill="#c8c8c8"/>
 <rect x="1413" y="117" width="18.5" height="21.5" fill="#f2f2f0"/>
 <path d="M1405,113 H1422 M1405,119 H1410 M1405,124 H1410 M1405,129 H1410 M1416,121 H1430 M1416,126.5 H1430 M1416,132 H1430 M1416,137 H1430" stroke="#c4c4c2" stroke-width="1.8"/>
 <!-- smartsuggest -->
 <rect x="1569.5" y="100.5" width="49" height="9" rx="1.5" fill="#c2d2e4" stroke="#9fb2c6" stroke-width="1.5"/>
 <rect x="1569.5" y="111.5" width="49" height="8.5" fill="#66b6e6"/>
 <path d="M1560.5,115.7 L1569.5,110.5 L1569.5,121 z M1627.5,115.7 L1618.5,110.5 L1618.5,121 z" fill="#5aaee2"/>
 <rect x="1569.5" y="122.5" width="49" height="8.5" rx="1.5" fill="#96abc2" stroke="#7e95ad" stroke-width="1.5"/>
 <rect x="1569.5" y="134.5" width="49" height="8.5" rx="1.5" fill="#718aa4" stroke="#5d7790" stroke-width="1.5"/>
 <path d="M1594.5,116 L1617,123.5 L1608,126 L1613,135 L1607,137 L1602,128.5 L1597,134 z" fill="#f5d230"/>
 <path d="M1594,104 V109 M1584,115 H1589 M1587,107 L1590.5,110.5 M1601,107 L1597.5,110.5 M1587,124 L1590.5,120.5" stroke="#f2e070" stroke-width="2"/>
 <!-- freeze columns -->
 <rect x="1798" y="102" width="38" height="39" fill="#edf2e6" stroke="#7ab568" stroke-width="2.6"/>
 <rect x="1810.5" y="103.5" width="13" height="36" fill="#b2dff7"/>
 <path d="M1799.5,109.5 H1834.5 M1799.5,117 H1834.5 M1799.5,124.5 H1834.5 M1799.5,132 H1834.5 M1810.5,103.5 V139.5 M1823.5,103.5 V139.5" stroke="#a9cf9a" stroke-width="1.3"/>
 <!-- filter -->
 <path d="M1968,104.5 H2006 L1990,122 V142 L1985.5,142 V122 z" fill="none" stroke="#1f5384" stroke-width="4" stroke-linejoin="round"/>
 <!-- refresh -->
 <circle cx="2134" cy="122.2" r="19.8" fill="url(#gRef)"/>
 <path d="M2134.5,112.4 A10.2,10.2 0 1 0 2144.3,122.8" fill="none" stroke="#eef3fa" stroke-width="3.8" stroke-linecap="round"/>
 <path d="M2132.5,106.8 L2140.5,112.2 L2132.5,117.8 z" fill="#eef3fa" stroke="#eef3fa" stroke-width="1.2" stroke-linejoin="round"/>
 <!-- views -->
 <rect x="2484" y="102" width="38" height="39" fill="#edf2e6" stroke="#7ab568" stroke-width="2.6"/>
 <path d="M2485.5,109.5 H2520.5 M2485.5,117 H2520.5 M2485.5,124.5 H2520.5 M2485.5,132 H2520.5 M2496.5,103.5 V139.5 M2509.5,103.5 V139.5" stroke="#a9cf9a" stroke-width="1.5"/>
 <!-- to diagram -->
 <circle cx="2633.7" cy="121.7" r="20.3" fill="url(#gRim)"/>
 <path d="M2626.5,111.6 L2644.3,120.7 L2626.5,130.2 L2630.3,120.9 z" fill="#e3e4de" stroke="#e3e4de" stroke-width="2.2" stroke-linejoin="round"/>
</svg>

</body></html>
